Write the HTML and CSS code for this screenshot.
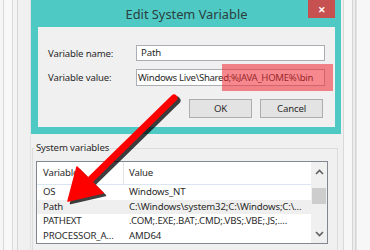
FILE: index.html
```html
<!DOCTYPE html>
<html lang="en">
  <head>
    <meta charset="UTF-8" />
    <link rel="stylesheet" href="styles.css">
    <title>Edit System Variable</title>
  </head>
  <body>
    <div class="desk">
      <div class="frameLeft">
        <span class="strip s1"></span>
        <span class="strip s2"></span>
        <span class="strip s3"></span>
        <span class="strip s4"></span>
      </div>

      <div class="main">
        <div class="dialog">
          <div class="titleBar">
            <div class="title">Edit System Variable</div>
            <div class="closeButton">&#x2715;</div>
          </div>
          <div class="content">
            <div class="field">
              <div class="label">Variable name:</div>
              <div class="input">Path</div>
            </div>
            <div class="field">
              <div class="label">Variable value:</div>
              <div class="input valueInput">Windows Live\Shared;%JAVA_HOME%\bin</div>
            </div>
            <div class="buttons">
              <div class="button">OK</div>
              <div class="button">Cancel</div>
            </div>
          </div>
          <!-- red marker drawn over the value -->
          <div class="marker"></div>
        </div>

        <div class="group">
          <div class="legend">System variables</div>
          <div class="list">
            <div class="table">
              <div class="row header">
                <div class="cell nameCol">Variable</div>
                <div class="cell valueCol">Value</div>
              </div>
              <div class="row">
                <div class="cell nameCol">OS</div>
                <div class="cell valueCol">Windows_NT</div>
              </div>
              <div class="row selected">
                <div class="cell nameCol">Path</div>
                <div class="cell valueCol">C:\Windows\system32;C:\Windows;C:\...</div>
              </div>
              <div class="row">
                <div class="cell nameCol">PATHEXT</div>
                <div class="cell valueCol">.COM;.EXE;.BAT;.CMD;.VBS;.VBE;.JS;....</div>
              </div>
              <div class="row">
                <div class="cell nameCol">PROCESSOR_A...</div>
                <div class="cell valueCol">AMD64</div>
              </div>
            </div>
            <div class="scrollbar">
              <svg class="chevron" width="9" height="6" viewBox="0 0 9 6"><path d="M1 5 L4.5 1.5 L8 5" fill="none" stroke="#606060" stroke-width="1.6"/></svg>
              <div class="track"><div class="thumb"></div></div>
              <svg class="chevron" width="9" height="6" viewBox="0 0 9 6"><path d="M1 1 L4.5 4.5 L8 1" fill="none" stroke="#606060" stroke-width="1.6"/></svg>
            </div>
          </div>
        </div>
      </div>

      <div class="frameRight">
        <span class="strip r1"></span>
        <span class="strip r2"></span>
        <span class="strip r3"></span>
        <span class="strip r4"></span>
      </div>
    </div>

    <!-- the big red arrow pointing at Path -->
    <svg class="arrow" width="370" height="250" viewBox="0 0 370 250">
      <g transform="translate(2.5 2.5)" fill="#000" stroke="#000" opacity="0.75">
        <line x1="174" y1="98" x2="88" y2="182" stroke-width="8" stroke-linecap="round"/>
        <polygon points="68,201 77,167 103,193" stroke-width="1.5" stroke-linejoin="round"/>
      </g>
      <g fill="#f00" stroke="#f00">
        <line x1="174" y1="98" x2="88" y2="182" stroke-width="7" stroke-linecap="round"/>
        <polygon points="68,201 77,167 103,193" stroke-width="1.5" stroke-linejoin="round"/>
      </g>
    </svg>
  </body>
</html>
```

FILE: styles.css
```css
* {
    box-sizing: border-box;
}

body {
    margin: 0;
    width: 370px;
    height: 250px;
    overflow: hidden;
    background: #f0f0f0;
    font-family: "Noto Sans", "Open Sans", sans-serif;
    font-size: 9.6px;
    letter-spacing: -0.15px;
    color: #2a2a2a;
}

.desk {
    display: flex;
    height: 250px;
}

/* window frames behind the dialog */
.frameLeft,
.frameRight {
    display: flex;
    height: 100%;
}
.frameLeft {
    width: 31px;
}
.frameRight {
    width: 29px;
}
.strip {
    display: block;
    height: 100%;
}
.s1 { width: 4px; background: #f6f6f6; border-right: 1px solid #d8d8d8; }
.s2 { width: 9px; background: #f8f8f8; border-right: 1px solid #dcdcdc; }
.s3 { width: 5px; background: #f3f3f3; border-right: 1px solid #d6d6d6; }
.s4 { width: 13px; background: #f0f0f0; border-right: 1px solid #e2e2e2; }

.r1 { width: 3px; background: #f0f0f0; border-right: 1px solid #d9d9d9; }
.r2 { width: 9px; background: #f7f7f7; border-right: 1px solid #d4d4d4; }
.r3 { width: 3px; background: #eeeeee; border-right: 1px solid #d4d4d4; }
.r4 { flex: 1; background: #f7f7f7; border-left: 1px solid #e4e4e4; }

.main {
    width: 310px;
    display: flex;
    flex-direction: column;
}

/* dialog */
.dialog {
    position: relative;
    height: 134px;
    background: #4ec9c4;
    padding: 0 6px 7px 7px;
    display: flex;
    flex-direction: column;
}

.titleBar {
    height: 27px;
    display: flex;
    align-items: flex-start;
}

.title {
    flex: 1;
    text-align: center;
    font-size: 12.8px;
    letter-spacing: 0;
    line-height: 28px;
    color: #2c3e3e;
    padding-left: 27px;
}

.closeButton {
    width: 27px;
    height: 18px;
    background: #c75050;
    color: #fff;
    font-size: 9px;
    font-weight: bold;
    display: grid;
    place-items: center;
}

.content {
    flex: 1;
    background: #f0f0f0;
    padding: 18px 10px 0 10px;
    display: flex;
    flex-direction: column;
}

.field {
    display: flex;
    align-items: center;
    margin-bottom: 8px;
}

.label {
    width: 88px;
}

.input {
    flex: 1;
    height: 16px;
    background: #fff;
    border: 1px solid #abadb3;
    padding-left: 4px;
    line-height: 14px;
    overflow: hidden;
    white-space: nowrap;
}

.valueInput {
    height: 17px;
    line-height: 15px;
    padding-left: 1px;
    letter-spacing: -0.3px;
}

.buttons {
    display: flex;
    justify-content: flex-end;
    gap: 8px;
    margin-top: 5px;
    padding-right: 2px;
}

.button {
    width: 63px;
    height: 19px;
    background: #e3e3e3;
    border: 1px solid #adadad;
    text-align: center;
    line-height: 17px;
}

.marker {
    position: absolute;
    left: 191px;
    top: 64px;
    width: 111px;
    height: 27px;
    background: rgba(240, 40, 50, 0.55);
}

/* group box */
.group {
    position: relative;
    margin: 14px 3px 0 1px;
    border: 1px solid #dcdcdc;
    border-bottom: none;
    flex: 1;
    padding: 12px 9px 0 3px;
}

.legend {
    position: absolute;
    top: -8px;
    left: 2px;
    background: #f0f0f0;
    padding: 0 1px;
    line-height: 14px;
}

.list {
    height: 83px;
    border: 1px solid #828790;
    background: #fff;
    display: flex;
}

.table {
    flex: 1;
    overflow: hidden;
}

.row {
    display: flex;
    height: 14.5px;
    line-height: 14.5px;
    white-space: nowrap;
}

.row.header {
    height: 23px;
    line-height: 22px;
    border-bottom: 1px solid #dbe6f4;
}

.row.selected {
    background: #efefef;
}

.cell {
    overflow: hidden;
    padding-left: 6px;
}

.nameCol {
    width: 87px;
}

.header .nameCol {
    border-right: 1px solid #e5e5e5;
}

.valueCol {
    flex: 1;
    padding-left: 5px;
}

.scrollbar {
    width: 16px;
    background: #f0f0f0;
    display: flex;
    flex-direction: column;
    align-items: center;
    padding: 7px 0 6px;
}

.chevron {
    display: block;
}

.track {
    flex: 1;
    width: 100%;
    padding-top: 13px;
}

.thumb {
    margin: 0 1px;
    height: 16px;
    background: #cdcdcd;
}

.arrow {
    position: absolute;
    left: 0;
    top: 0;
}
```
